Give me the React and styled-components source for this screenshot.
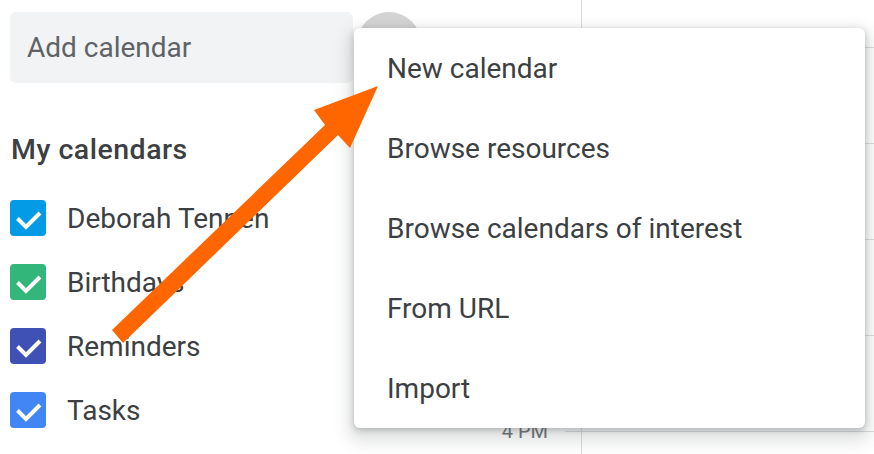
import React from "react";
import styled, { createGlobalStyle } from "styled-components";

const GlobalStyle = createGlobalStyle`
  html, body {
    margin: 0;
    padding: 0;
    background: #ffffff;
  }
  body {
    font-family: Roboto, "Liberation Sans", Arial, sans-serif;
    color: #3c4043;
  }
`;

const calendars = [
  { name: "Deborah Tennen", color: "#039be5" },
  { name: "Birthdays", color: "#33b679" },
  { name: "Reminders", color: "#3f51b5" },
  { name: "Tasks", color: "#4285f4" },
];

// only the last hour label shows from under the menu
const hours = ["", "", "", "", "4 PM"];

const menuItems = [
  "New calendar",
  "Browse resources",
  "Browse calendars of interest",
  "From URL",
  "Import",
];

const App = () => {
  return (
    <>
      <GlobalStyle />
      <Page>
        <Sidebar>
          <AddRow>
            <AddInput>Add calendar</AddInput>
            <PlusButton />
          </AddRow>
          <Heading>My calendars</Heading>
          <List>
            {calendars.map((c) => (
              <Row key={c.name}>
                <Check $color={c.color}>
                  <svg width="36" height="36" viewBox="0 0 36 36">
                    <path
                      d="M7.5 18.5 L16 27 L30 13"
                      fill="none"
                      stroke="#fff"
                      strokeWidth="4"
                    />
                  </svg>
                </Check>
                <Label>{c.name}</Label>
              </Row>
            ))}
          </List>
        </Sidebar>

        <Gutter>
          {hours.map((h, i) => (
            <HourMark key={i}>
              {h && <TimeLabel>{h}</TimeLabel>}
              <Tick />
            </HourMark>
          ))}
        </Gutter>

        <Grid>
          {hours.map((h, i) => (
            <HourCell key={i} />
          ))}
        </Grid>

        <Menu>
          {menuItems.map((item) => (
            <MenuItem key={item}>{item}</MenuItem>
          ))}
        </Menu>

        <Arrow width="874" height="454" viewBox="0 0 874 454">
          <polygon
            points="112,330 325,125 314,110 378,86 350,148 338,135 123,343"
            fill="#ff6600"
          />
        </Arrow>
      </Page>
    </>
  );
};

const Page = styled.div`
  position: relative;
  display: flex;
  width: 874px;
  height: 454px;
  overflow: hidden;
  background: #fff;
`;

const Sidebar = styled.div`
  width: 430px;
  flex-shrink: 0;
  padding: 12px 0 0 10px;
  box-sizing: border-box;
`;

const AddRow = styled.div`
  display: flex;
  align-items: flex-start;
  gap: 4px;
`;

const AddInput = styled.div`
  width: 343px;
  height: 71px;
  display: flex;
  align-items: center;
  padding-left: 17px;
  box-sizing: border-box;
  background: #f1f3f4;
  border-radius: 6px;
  font-size: 28px;
  color: #5f6368;
`;

const PlusButton = styled.div`
  width: 64px;
  height: 64px;
  border-radius: 50%;
  background: #d4d4d4;
`;

const Heading = styled.div`
  margin-top: 51px;
  padding-left: 1px;
  font-size: 28.5px;
  font-weight: 500;
  letter-spacing: 0.5px;
  line-height: 32px;
  color: #3c4043;
`;

const List = styled.div`
  margin-top: 20px;
  display: flex;
  flex-direction: column;
`;

const Row = styled.div`
  display: flex;
  align-items: center;
  height: 64px;
  gap: 21px;
`;

const Check = styled.div`
  width: 36px;
  height: 36px;
  border-radius: 4px;
  background: ${(p) => p.$color};
  display: flex;
  svg {
    display: block;
  }
`;

const Label = styled.div`
  font-size: 28px;
  color: #3c4043;
`;

const Gutter = styled.div`
  width: 151px;
  flex-shrink: 0;
  padding-top: 47px;
  box-sizing: border-box;
  display: flex;
  flex-direction: column;
`;

const HourMark = styled.div`
  position: relative;
  height: 96px;
  display: flex;
  justify-content: flex-end;
  flex-shrink: 0;
`;

const TimeLabel = styled.div`
  margin-right: 33px;
  margin-top: -12px;
  font-size: 20px;
  line-height: 24px;
  color: #70757a;
`;

const Tick = styled.div`
  position: absolute;
  right: 0;
  top: 0;
  width: 16px;
  border-top: 1px solid #dadce0;
`;

const Grid = styled.div`
  flex: 1;
  border-left: 1px solid #dadce0;
  padding-top: 47px;
  display: flex;
  flex-direction: column;
`;

const HourCell = styled.div`
  height: 96px;
  flex-shrink: 0;
  border-top: 1px solid #dadce0;
  box-sizing: border-box;
`;

const Menu = styled.div`
  position: absolute;
  left: 354px;
  top: 28px;
  width: 511px;
  height: 400px;
  background: #fff;
  border-radius: 6px;
  box-shadow: 0 2px 6px rgba(60, 64, 67, 0.3),
    0 8px 16px 6px rgba(60, 64, 67, 0.15);
  display: flex;
  flex-direction: column;
`;

const MenuItem = styled.div`
  height: 80px;
  display: flex;
  align-items: center;
  padding-left: 33px;
  font-size: 28px;
  color: #3c4043;
`;

const Arrow = styled.svg`
  position: absolute;
  left: 0;
  top: 0;
  pointer-events: none;
`;

export default App;
